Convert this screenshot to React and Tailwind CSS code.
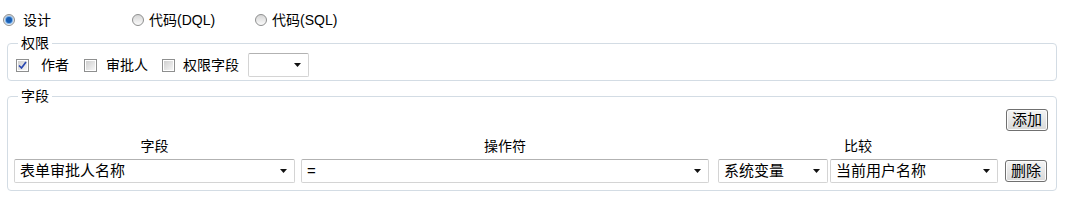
import React from "react";

const font = "font-['Liberation_Sans','Noto_Sans_CJK_SC',sans-serif]";

const Radio = ({ checked }) => (
  <span className="inline-flex items-center justify-center w-[12px] h-[12px] rounded-full border border-[#8e8f8f] bg-gradient-to-b from-[#d6d6d6] to-[#fbfbfb] shrink-0">
    {checked && (
      <span className="w-[6px] h-[6px] rounded-full bg-[#1a5fb4] shadow-[0_0_1px_1px_#6aa8ea]" />
    )}
  </span>
);

const Checkbox = ({ checked }) => (
  <span className="inline-flex items-center justify-center w-[13px] h-[13px] border border-[#8e8f8f] bg-white shrink-0">
    <span className="w-[9px] h-[9px] bg-gradient-to-br from-[#cfcfcf] to-[#f6f6f6] flex items-center justify-center">
      {checked && (
        <svg width="9" height="9" viewBox="0 0 9 9">
          <path d="M1 4.5 L3.5 7 L8 1" fill="none" stroke="#2a48b0" strokeWidth="1.7" />
        </svg>
      )}
    </span>
  </span>
);

const Select = ({ value, className }) => (
  <div
    className={
      "h-[24px] flex items-center justify-between border border-[#d4d4d4] border-t-[#b2b2b2] rounded-[2px] bg-white pl-[5px] pr-[7px] text-[15px] leading-[18px] text-black " +
      className
    }
  >
    <span className="whitespace-nowrap">{value}</span>
    <svg width="7" height="4" viewBox="0 0 7 4" className="shrink-0">
      <path d="M0 0 L7 0 L3.5 4 Z" fill="#111" />
    </svg>
  </div>
);

const Button = ({ children }) => (
  <button className="h-[22px] w-[42px] border border-[#707070] rounded-[3px] bg-gradient-to-b from-[#f4f4f4] to-[#d9d9d9] text-[15px] leading-[16px] text-black shadow-[inset_0_0_0_1px_#fcfcfc]">
    {children}
  </button>
);

export default function App() {
  return (
    <div className={`w-[1068px] h-[202px] bg-white text-black text-[14px] ${font}`}>
      {/* mode */}
      <div className="pt-[11px] h-[29px] flex items-center leading-[18px]">
        <div className="flex items-center ml-[3px] w-[129px]">
          <Radio checked />
          <span className="ml-[8px]">设计</span>
        </div>
        <div className="flex items-center w-[123px]">
          <Radio />
          <span className="ml-[5px]">代码(DQL)</span>
        </div>
        <div className="flex items-center">
          <Radio />
          <span className="ml-[5px]">代码(SQL)</span>
        </div>
      </div>

      {/* 权限 */}
      <fieldset className="mt-[5px] ml-[7px] w-[1050px] border border-[#d3dce4] rounded-[4px] pb-[3px]">
        <legend className="ml-[10px] px-[3px] leading-[18px]">权限</legend>
        <div className="flex items-center mt-[1px] h-[24px] leading-[18px]">
          <span className="ml-[8px]"><Checkbox checked /></span>
          <span className="ml-[12px]">作者</span>
          <span className="ml-[15px]"><Checkbox /></span>
          <span className="ml-[9px]">审批人</span>
          <span className="ml-[14px]"><Checkbox /></span>
          <span className="ml-[8px]">权限字段</span>
          <Select value="" className="ml-[9px] w-[61px]" />
        </div>
      </fieldset>

      {/* 字段 */}
      <fieldset className="mt-[6px] ml-[7px] w-[1050px] border border-[#d3dce4] rounded-[4px] pb-[7px]">
        <legend className="ml-[10px] px-[3px] leading-[18px]">字段</legend>
        <div className="flex justify-end pr-[8px] mt-[4px]">
          <Button>添加</Button>
        </div>
        <div className="flex mt-[7px] pl-[6px] leading-[16px]">
          <div className="w-[281px] text-center">字段</div>
          <div className="ml-[6px] w-[408px] text-center">操作符</div>
          <div className="ml-[9px] w-[280px] text-center">比较</div>
        </div>
        <div className="flex items-center mt-[5px] pl-[6px]">
          <Select value="表单审批人名称" className="w-[281px]" />
          <Select value="=" className="ml-[6px] w-[408px]" />
          <Select value="系统变量" className="ml-[9px] w-[110px]" />
          <Select value="当前用户名称" className="ml-[2px] w-[168px]" />
          <div className="ml-[7px]">
            <Button>删除</Button>
          </div>
        </div>
      </fieldset>
    </div>
  );
}
